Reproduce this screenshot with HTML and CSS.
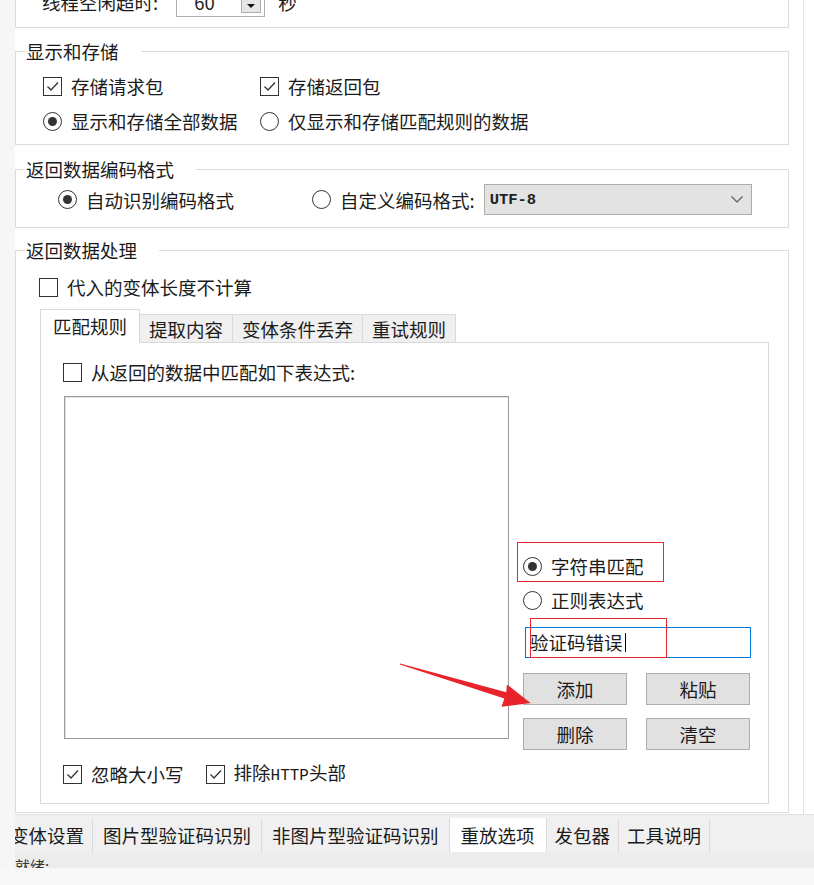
FILE: index.html
```html
<!DOCTYPE html>
<html lang="zh-CN">
<head>
<meta charset="utf-8">
<title>重放选项</title>
<link rel="stylesheet" href="styles.css">
</head>
<body>
<div class="window">
  <div class="main">
    <div class="gutter"></div>
    <div class="content">
      <div class="scroll">
        <div class="scroll-inner">
          <div class="group-top">
            <div class="row-cut">
              <span class="cut-label">线程空闲超时:</span>
              <span class="spin"><span class="spin-val">60</span><span class="spin-btn"><span class="tri"></span></span></span>
              <span class="unit">秒</span>
            </div>
          </div>

          <fieldset class="group g-store">
            <legend>显示和存储</legend>
            <div class="store-body">
              <label class="ctl"><span class="chk"><svg viewBox="0 0 17 17" width="17" height="17"><polyline points="3.5,8.5 7,12 14,4.5" fill="none" stroke="#333" stroke-width="1.3"/></svg></span>存储请求包</label>
              <label class="ctl"><span class="chk"><svg viewBox="0 0 17 17" width="17" height="17"><polyline points="3.5,8.5 7,12 14,4.5" fill="none" stroke="#333" stroke-width="1.3"/></svg></span>存储返回包</label>
              <label class="ctl"><span class="radio on"></span>显示和存储全部数据</label>
              <label class="ctl"><span class="radio"></span>仅显示和存储匹配规则的数据</label>
            </div>
          </fieldset>

          <fieldset class="group g-enc">
            <legend>返回数据编码格式</legend>
            <div class="enc-body">
              <label class="ctl"><span class="radio on"></span>自动识别编码格式</label>
              <label class="ctl"><span class="radio"></span>自定义编码格式:</label>
              <div class="select"><span class="select-val">UTF-8</span><svg class="chev" viewBox="0 0 12 7" width="12" height="7"><polyline points="0.5,0.5 6,6 11.5,0.5" fill="none" stroke="#555" stroke-width="1.1"/></svg></div>
            </div>
          </fieldset>

          <fieldset class="group g-proc">
            <legend>返回数据处理</legend>
            <div class="proc-body">
              <label class="ctl"><span class="chk"></span>代入的变体长度不计算</label>
              <div class="tabctl">
                <div class="tabs-head">
                  <div class="tab active">匹配规则</div>
                  <div class="tab">提取内容</div>
                  <div class="tab">变体条件丢弃</div>
                  <div class="tab">重试规则</div>
                </div>
                <div class="tab-panel">
                  <label class="ctl"><span class="chk"></span>从返回的数据中匹配如下表达式:</label>
                  <div class="match-body">
                    <div class="listbox"></div>
                    <div class="side">
                      <label class="ctl side-r1"><span class="radio on"></span>字符串匹配</label>
                      <label class="ctl side-r2"><span class="radio"></span>正则表达式</label>
                      <div class="textbox">验证码错误<span class="caret"></span></div>
                      <div class="btns">
                        <button class="btn">添加</button>
                        <button class="btn">粘贴</button>
                        <button class="btn">删除</button>
                        <button class="btn">清空</button>
                      </div>
                    </div>
                  </div>
                  <div class="opts">
                    <label class="ctl"><span class="chk"><svg viewBox="0 0 17 17" width="17" height="17"><polyline points="3.5,8.5 7,12 14,4.5" fill="none" stroke="#333" stroke-width="1.3"/></svg></span>忽略大小写</label>
                    <label class="ctl opt2"><span class="chk"><svg viewBox="0 0 17 17" width="17" height="17"><polyline points="3.5,8.5 7,12 14,4.5" fill="none" stroke="#333" stroke-width="1.3"/></svg></span><span class="txt">排除<span class="mono">HTTP</span>头部</span></label>
                  </div>
                </div>
              </div>
            </div>
          </fieldset>
        </div>
      </div>

      <div class="btabs">
        <div class="btab bt-first">变体设置</div>
        <div class="btab">图片型验证码识别</div>
        <div class="btab">非图片型验证码识别</div>
        <div class="btab bt-active">重放选项</div>
        <div class="btab bt-narrow">发包器</div>
        <div class="btab bt-narrow">工具说明</div>
      </div>
      <div class="status"><span class="status-text">就绪:</span></div>
    </div>
  </div>
  <div class="footer"></div>

  <div class="mark mark-1"></div>
  <div class="mark mark-2"></div>
  <svg class="arrow" viewBox="0 0 140 60" width="140" height="60">
    <polygon points="5,8.4 111.3,37.3 111.9,29.5 135.6,47.9 106.4,51.8 109.4,43.4 4.8,9.6" fill="#e8242a"/>
  </svg>
</div>
</body>
</html>
```

FILE: styles.css
```css
* { box-sizing: border-box; }

body {
  margin: 0;
  width: 814px;
  height: 885px;
  overflow: hidden;
  background: #f8f8f8;
  color: #1b1b1b;
  font-family: "Noto Sans CJK SC", "Noto Sans", sans-serif;
  font-size: 18.5px;
  line-height: 24px;
}

.window {
  position: relative;
  width: 814px;
  height: 885px;
  display: flex;
  flex-direction: column;
}

.main {
  display: flex;
  height: 868px;
}

.gutter {
  width: 15px;
  flex: none;
  background: #f6f6f6;
}

.content {
  flex: 1;
  min-width: 0;
  display: flex;
  flex-direction: column;
}

.scroll {
  height: 814px;
  overflow: hidden;
  background: #fff;
}

.scroll-inner {
  width: 789px;
  height: 100%;
  border-right: 1px solid #e3e3e3;
}

/* cut-off top group */
.group-top {
  display: flow-root;
  width: 774px;
  height: 28px;
  border: 1px solid #dcdcdc;
  border-top: none;
}

.row-cut {
  display: flex;
  align-items: center;
  height: 31px;
  margin-top: -14px;
  padding-left: 26px;
}

.spin {
  display: flex;
  align-items: flex-start;
  justify-content: space-between;
  width: 89px;
  height: 31px;
  margin-left: 18px;
  padding: 1px 3px 0 17px;
  border: 1px solid #adadad;
  background: #fff;
}

.spin-val { line-height: 28px; }

.spin-btn {
  width: 20px;
  height: 25px;
  border: 1px solid #adadad;
  background: #e6e6e6;
  display: flex;
  align-items: flex-end;
  justify-content: center;
  padding-bottom: 4px;
}

.tri {
  width: 0;
  height: 0;
  border-left: 4px solid transparent;
  border-right: 4px solid transparent;
  border-top: 4px solid #111;
}

.unit { margin-left: 13px; }

/* group boxes */
.group {
  width: 774px;
  min-width: 0;
  margin: 0;
  padding: 0;
  border: 1px solid #dcdcdc;
}

.group legend {
  margin-left: 9px;
  padding: 0 22px 0 1px;
  height: 24px;
  line-height: 24px;
}

.g-store { margin-top: 11px; }
.g-enc { margin-top: 12px; }
.g-proc { margin-top: 10px; }

.store-body {
  display: grid;
  grid-template-columns: 217px auto;
  row-gap: 11px;
  padding: 11px 0 11px 27px;
}

.enc-body {
  display: grid;
  grid-template-columns: 254px auto auto;
  justify-content: start;
  align-items: center;
  padding: 3px 0 12px 42px;
}

.proc-body {
  padding: 13px 0 8px 23px;
}

/* controls */
.ctl {
  display: flex;
  width: max-content;
  align-items: center;
  gap: 9px;
  height: 24px;
  white-space: nowrap;
}

.chk {
  width: 19px;
  height: 19px;
  flex: none;
  border: 1px solid #333;
  background: #fff;
  display: flex;
  align-items: center;
  justify-content: center;
}

.radio {
  width: 19px;
  height: 19px;
  flex: none;
  border: 1px solid #333;
  border-radius: 50%;
  background: #fff;
  display: flex;
  align-items: center;
  justify-content: center;
}

.radio.on::after {
  content: "";
  width: 9px;
  height: 9px;
  border-radius: 50%;
  background: #333;
}

.select {
  width: 268px;
  height: 31px;
  margin-left: 9px;
  padding: 0 6px 0 5px;
  border: 1px solid #adadad;
  background: #e3e3e3;
  display: flex;
  align-items: center;
  justify-content: space-between;
}

.select-val {
  font-family: "Liberation Mono", "DejaVu Sans Mono", monospace;
  font-size: 15.5px;
  font-weight: bold;
  color: #222;
}

.chev { margin-right: 2px; }

/* inner tab control */
.tabctl {
  width: 729px;
  margin: 10px 0 0 1px;
}

.tabs-head {
  display: flex;
  align-items: flex-end;
  height: 33px;
}

.tab {
  height: 28px;
  padding: 1px 9px 0;
  margin-right: -1px;
  border: 1px solid #d9d9d9;
  border-bottom: none;
  background: #f0f0f0;
  line-height: 26px;
  white-space: nowrap;
}

.tab.active {
  position: relative;
  z-index: 1;
  height: 34px;
  margin-bottom: -1px;
  padding: 0 12px;
  background: #fff;
  line-height: 33px;
}

.tab-panel {
  height: 462px;
  border: 1px solid #d9d9d9;
  background: #fff;
  padding: 17px 0 0 22px;
}

.match-body {
  display: flex;
  align-items: flex-start;
  margin-top: 12px;
}

.listbox {
  width: 445px;
  height: 343px;
  margin-left: 1px;
  border: 1px solid #9a9a9a;
  box-shadow: inset 1px 1px 0 #e4e4e4;
  background: #fff;
}

.side {
  width: 228px;
  margin-left: 14px;
  display: flex;
  flex-direction: column;
  align-items: flex-start;
}

.side-r1 { margin-top: 158px; }
.side-r2 { margin-top: 10px; }

.textbox {
  width: 226px;
  height: 31px;
  margin: 15px 0 0 2px;
  padding-left: 4px;
  border: 1px solid #0078d7;
  background: #fff;
  line-height: 29px;
  display: flex;
  align-items: center;
}

.caret {
  width: 1px;
  height: 19px;
  margin-left: 2px;
  background: #000;
}

.btns {
  display: grid;
  grid-template-columns: 104px 104px;
  grid-auto-rows: 32px;
  column-gap: 19px;
  row-gap: 13px;
  margin-top: 15px;
}

.btn {
  margin: 0;
  padding: 0;
  border: 1px solid #adadad;
  background: #e1e1e1;
  color: #1b1b1b;
  font: inherit;
  line-height: 30px;
}

.opts {
  display: flex;
  margin-top: 12px;
}

.opt2 { margin-left: 22px; }

.mono {
  font-family: "Liberation Mono", "DejaVu Sans Mono", monospace;
  font-size: 16px;
}

/* bottom tabs */
.btabs {
  height: 38px;
  display: flex;
  align-items: flex-end;
  overflow: hidden;
  border-top: 1px solid #e2e2e2;
  background: #f0f0f0;
  padding-top: 4px;
}

.btab {
  flex: none;
  height: 33px;
  padding: 0 10px;
  border-right: 1px solid #dadada;
  line-height: 32px;
  white-space: nowrap;
  color: #1b1b1b;
}

.bt-first {
  margin-left: -5px;
  padding: 0 8px 0 0;
}

.bt-active {
  height: 34px;
  padding: 0 11px;
  background: #fff;
  line-height: 34px;
}

.bt-narrow { padding: 0 8px; }

.status {
  height: 16px;
  overflow: hidden;
  background: #ececec;
}

.status-text {
  display: block;
  padding-top: 4px;
  font-size: 15px;
  line-height: 20px;
  color: #333;
}

.footer {
  height: 17px;
  background: #f8f8f8;
}

/* annotation overlays */
.mark {
  position: absolute;
  border: 1px solid #e8262d;
}

.mark-1 { left: 517px; top: 542px; width: 147px; height: 40px; }
.mark-2 { left: 530px; top: 618px; width: 137px; height: 40px; }

.arrow {
  position: absolute;
  left: 395px;
  top: 655px;
}
```
